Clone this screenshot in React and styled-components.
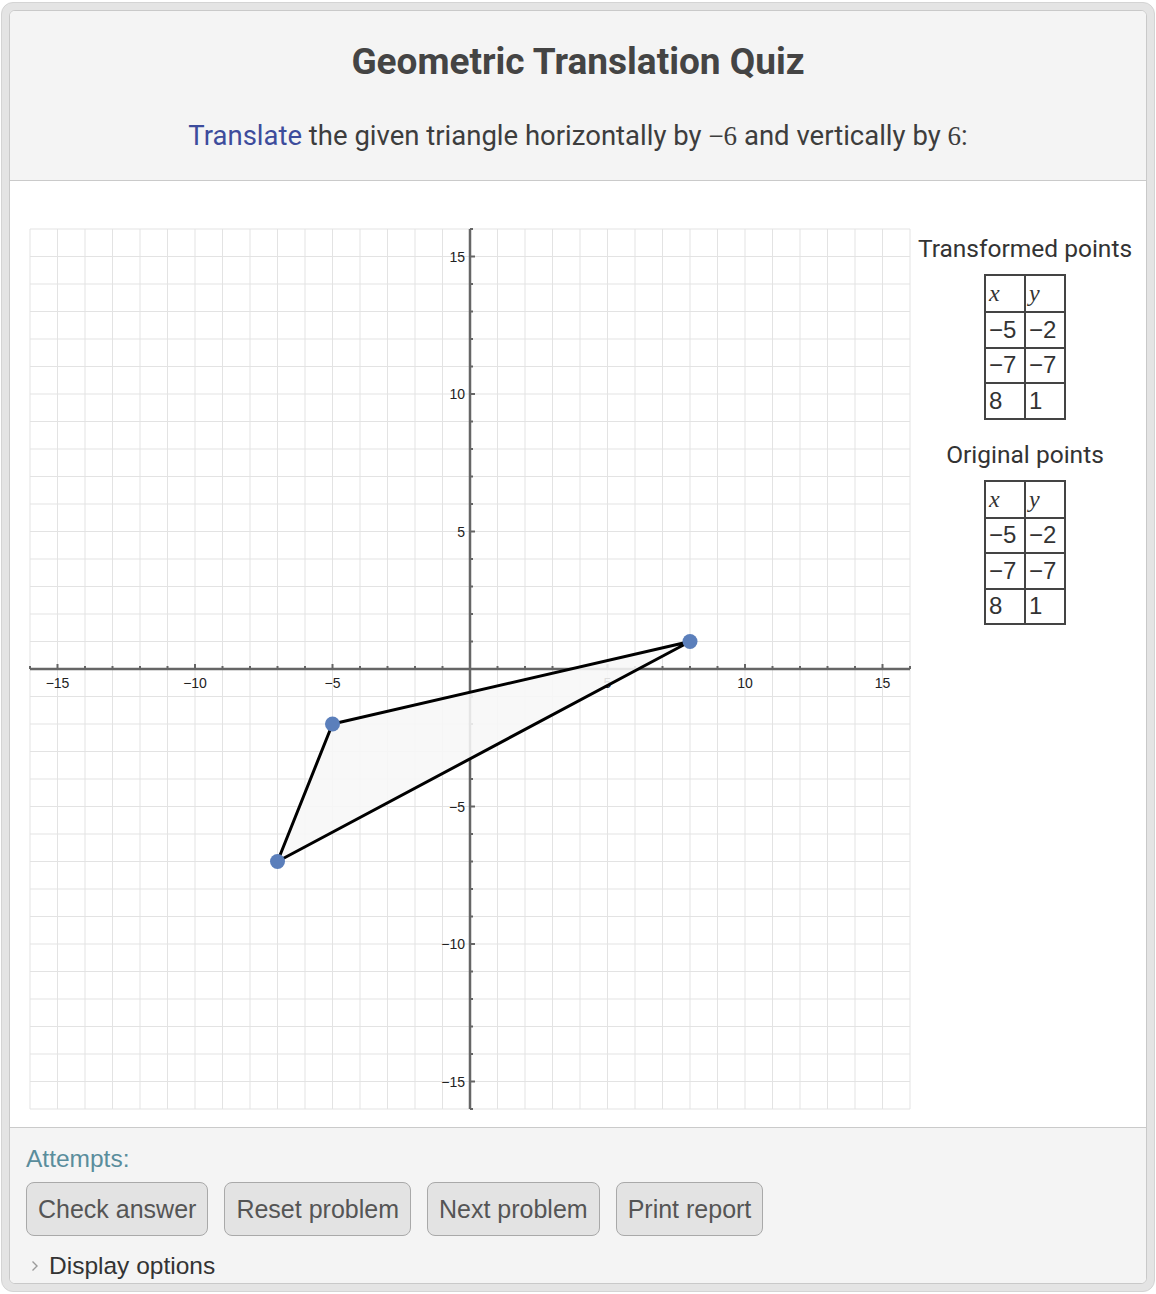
import React from 'react';
import styled, { createGlobalStyle } from 'styled-components';

const UNIT = 27.5;
const SIZE = UNIT * 32;
const ORIGIN = SIZE / 2;

const toX = (x) => ORIGIN + x * UNIT;
const toY = (y) => ORIGIN - y * UNIT;
const minus = (n) => (n < 0 ? `\u2212${Math.abs(n)}` : `${n}`);

const triangle = [
  { x: -5, y: -2 },
  { x: -7, y: -7 },
  { x: 8, y: 1 },
];

const range = [];
for (let i = -16; i <= 16; i += 1) range.push(i);

const buttons = ['Check answer', 'Reset problem', 'Next problem', 'Print report'];

const Graph = () => {
  const polygon = triangle.map((p) => `${toX(p.x)},${toY(p.y)}`).join(' ');

  return (
    <GraphSvg width={SIZE} height={SIZE} viewBox={`0 0 ${SIZE} ${SIZE}`}>
      {range.map((i) => (
        <g key={`grid${i}`}>
          <line x1={toX(i)} y1={0} x2={toX(i)} y2={SIZE} stroke="#e3e3e3" strokeWidth="1" />
          <line x1={0} y1={toY(i)} x2={SIZE} y2={toY(i)} stroke="#e3e3e3" strokeWidth="1" />
        </g>
      ))}

      <line x1={0} y1={ORIGIN} x2={SIZE} y2={ORIGIN} stroke="#666" strokeWidth="2.5" />
      <line x1={ORIGIN} y1={0} x2={ORIGIN} y2={SIZE} stroke="#666" strokeWidth="2.5" />

      {range.filter((i) => i !== 0).map((i) => {
        const len = i % 5 === 0 ? 5 : 3;
        return (
          <g key={`tick${i}`}>
            <line x1={toX(i)} y1={ORIGIN} x2={toX(i)} y2={ORIGIN - len} stroke="#666" strokeWidth="2" />
            <line x1={ORIGIN} y1={toY(i)} x2={ORIGIN + len} y2={toY(i)} stroke="#666" strokeWidth="2" />
          </g>
        );
      })}

      {[-15, -10, -5, 5, 10, 15].map((i) => (
        <g key={`label${i}`}>
          <text x={toX(i)} y={ORIGIN + 18.5} textAnchor="middle">{minus(i)}</text>
          <text x={ORIGIN - 5} y={toY(i) + 5} textAnchor="end">{minus(i)}</text>
        </g>
      ))}

      <polygon points={polygon} fill="rgba(247,247,247,0.88)" />
      <polygon points={polygon} fill="none" stroke="#000" strokeWidth="3" strokeLinejoin="round" />

      {triangle.map((p) => (
        <circle key={`${p.x}${p.y}`} cx={toX(p.x)} cy={toY(p.y)} r="7.5" fill="#5b7fbb" />
      ))}
    </GraphSvg>
  );
};

const PointsTable = ({ points }) => (
  <Table>
    <tbody>
      <tr>
        <HeadCell>x</HeadCell>
        <HeadCell>y</HeadCell>
      </tr>
      {points.map((p) => (
        <tr key={`${p.x}${p.y}`}>
          <Cell>{minus(p.x)}</Cell>
          <Cell>{minus(p.y)}</Cell>
        </tr>
      ))}
    </tbody>
  </Table>
);

const App = () => {
  const transformed = [
    { x: -5, y: -2 },
    { x: -7, y: -7 },
    { x: 8, y: 1 },
  ];

  return (
    <>
      <GlobalStyle />
      <Frame>
        <Panel>
          <Header>
            <Title>Geometric Translation Quiz</Title>
            <Prompt>
              <Link>Translate</Link> the given triangle horizontally by <MathNum>&minus;6</MathNum> and
              vertically by <MathNum>6</MathNum>:
            </Prompt>
          </Header>

          <Body>
            <Graph />
            <Side>
              <SideLabel>Transformed points</SideLabel>
              <PointsTable points={transformed} />
              <SideLabel spaced>Original points</SideLabel>
              <PointsTable points={triangle} />
            </Side>
          </Body>

          <Footer>
            <Attempts>Attempts:</Attempts>
            <ButtonRow>
              {buttons.map((label) => (
                <Button key={label}>{label}</Button>
              ))}
            </ButtonRow>
            <Options>
              <svg width="8" height="12" viewBox="0 0 8 12">
                <path d="M1.5 1.5 L6 6 L1.5 10.5" fill="none" stroke="#9a9a9a" strokeWidth="1.4" />
              </svg>
              Display options
            </Options>
          </Footer>
        </Panel>
      </Frame>
    </>
  );
};

const GlobalStyle = createGlobalStyle`
  body {
    margin: 0;
    background: #fff;
    font-family: Roboto, "Noto Sans", sans-serif;
  }
`;

const Frame = styled.div`
  box-sizing: border-box;
  width: 1154px;
  height: 1290px;
  margin: 2px 0 0 1px;
  padding: 7px;
  background: #e4e4e4;
  border: 1px solid #d4d4d4;
  border-radius: 12px;
`;

const Panel = styled.div`
  box-sizing: border-box;
  height: 100%;
  display: flex;
  flex-direction: column;
  border: 1px solid #c9c9c9;
  border-radius: 6px;
  overflow: hidden;
  background: #fff;
`;

const Header = styled.div`
  padding: 30px 0 29px;
  background: #f4f4f4;
  border-bottom: 1px solid #cacaca;
  text-align: center;
  color: #444;
`;

const Title = styled.h1`
  margin: 0;
  font-size: 37px;
  line-height: 42px;
  font-weight: 700;
  color: #444;
`;

const Prompt = styled.div`
  margin-top: 38px;
  font-size: 27.5px;
  line-height: 30px;
  color: #3d3d3d;
`;

const Link = styled.span`
  color: #3d4c9c;
`;

const MathNum = styled.span`
  font-family: "Liberation Serif", serif;
  font-size: 27px;
`;

const Body = styled.div`
  display: flex;
  padding: 48px 6px 18px 20px;
  background: #fff;
`;

const GraphSvg = styled.svg`
  flex: none;
  overflow: visible;

  text {
    font-family: "Liberation Sans", Arial, sans-serif;
    font-size: 14px;
    fill: #222;
  }
`;

const Side = styled.div`
  flex: 1;
  display: flex;
  flex-direction: column;
  align-items: center;
  padding-top: 6px;
`;

const SideLabel = styled.div`
  margin-top: ${(props) => (props.spaced ? '21px' : '0')};
  margin-bottom: 11px;
  font-size: 24.5px;
  line-height: 28px;
  color: #333;
`;

const Table = styled.table`
  border-collapse: collapse;
  border: 2px solid #444;
`;

const Cell = styled.td`
  box-sizing: border-box;
  width: 40px;
  height: 35.5px;
  padding: 0 3px;
  border: 2px solid #444;
  font-family: "Liberation Sans", Arial, sans-serif;
  font-size: 24px;
  color: #333;
  text-align: left;
`;

const HeadCell = styled(Cell)`
  height: 37px;
  font-family: "Liberation Serif", serif;
  font-style: italic;
`;

const Footer = styled.div`
  flex: 1;
  padding: 17px 16px 2px;
  background: #f4f4f4;
  border-top: 1px solid #cacaca;
`;

const Attempts = styled.div`
  font-family: "Liberation Sans", Arial, sans-serif;
  font-size: 24.5px;
  line-height: 28px;
  color: #5a8d9c;
`;

const ButtonRow = styled.div`
  display: flex;
  gap: 16px;
  margin-top: 9px;
`;

const Button = styled.button`
  height: 54px;
  padding: 0 11px;
  background: #e3e3e3;
  border: 1px solid #a9a9a9;
  border-radius: 8px;
  font-family: "Liberation Sans", Arial, sans-serif;
  font-size: 25px;
  color: #555;
  cursor: pointer;
`;

const Options = styled.div`
  display: flex;
  align-items: center;
  gap: 10px;
  margin-top: 16px;
  padding-left: 5px;
  font-family: "Liberation Sans", Arial, sans-serif;
  font-size: 24.5px;
  line-height: 28px;
  color: #333;
`;

export default App;
